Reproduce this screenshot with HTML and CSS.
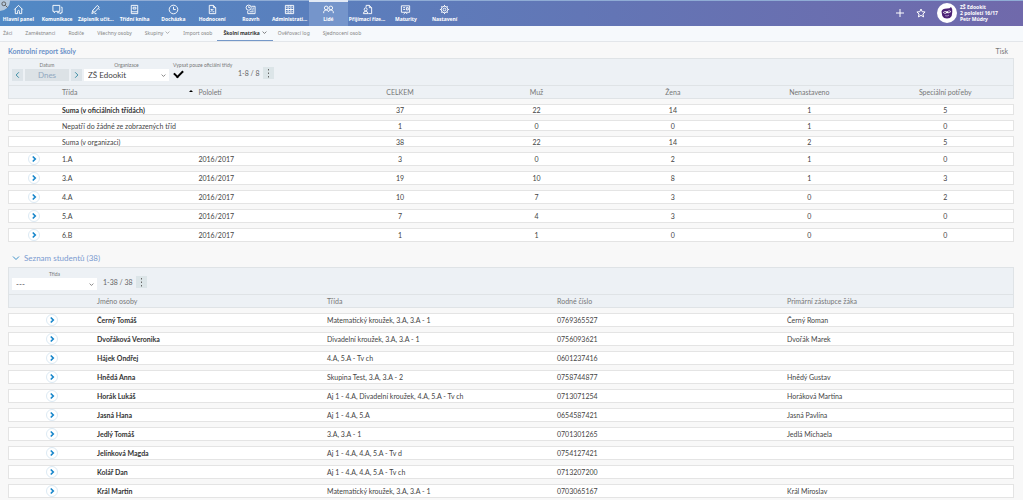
FILE: index.html
```html
<!DOCTYPE html>
<html lang="cs">
<head>
<meta charset="utf-8">
<title>Kontrolní report školy</title>
<link rel="stylesheet" href="styles.css">
</head>
<body>
<svg class="defs" aria-hidden="true">
<symbol id="right" viewBox="0 0 12 12"><path d="M4.500 3 7.500 6 4.500 9"/></symbol>
<symbol id="down" viewBox="0 0 8 8"><path d="M1 2.500 4 5.500 7 2.500"/></symbol>
</svg>
<header class="topbar">
<a class="search" href="#" aria-label="Hledat"><svg viewBox="0 0 8 8"><circle cx="3.200" cy="3.200" r="2.200"/><path d="M5 5 7.500 7.500"/></svg></a>
<nav class="main-nav">
<a href="#"><svg viewBox="0 0 12 12"><path d="M1.500 6 6 1.500 10.500 6M2.500 5v5.500H5V8a1 1 0 0 1 2 0v2.500h2.500V5"/></svg><span>Hlavní panel</span></a>
<a href="#"><svg viewBox="0 0 12 12"><path d="M1 1.500h7.500v6.500H4L2.500 9.500V8H1zM10 3.500h1V9.500H9.500V11L8 9.500H5.500"/></svg><span>Komunikace</span></a>
<a href="#"><svg viewBox="0 0 12 12"><path d="M2 10.500 3 7l5-5.500L10 3.500 5 9zM3 7l2 2M5 10.500h2M9 5l1.500 1"/></svg><span>Zápisník učit…</span></a>
<a href="#"><svg viewBox="0 0 12 12"><path d="M2.500 1.500h7v9h-7zM2.500 8.500h7M4.500 3.500h3v2h-3z"/></svg><span>Třídní kniha</span></a>
<a href="#"><svg viewBox="0 0 12 12"><circle cx="6" cy="6" r="4.700"/><path d="M6 3v3h2.500"/></svg><span>Docházka</span></a>
<a href="#"><svg viewBox="0 0 12 12"><path d="M2.500 1.500H7l2.500 2.500v6.500h-7zM7 1.500V4h2.500M4 8.500l3-3M4 6h2M6 8.500h2"/></svg><span>Hodnocení</span></a>
<a href="#"><svg viewBox="0 0 12 12"><circle cx="4" cy="4" r="2.800"/><path d="M4 2.500V4h1.500M7 2.500h4v8H3V7.500M5 8.500h4.500M7 6.500h2.500M8 4.500h2"/></svg><span>Rozvrh</span></a>
<a href="#"><svg viewBox="0 0 12 12"><path d="M1.500 1.500h9v9h-9zM4.500 1.500v9M7.500 1.500v9M1.500 6h9M3 3v1M6 3v1M9 3v1M3 8v1M6 8v1M9 8v1"/></svg><span>Administrati…</span></a>
<a href="#" class="active"><svg viewBox="0 0 12 12"><circle cx="3.500" cy="4.300" r="2"/><circle cx="8.500" cy="4.300" r="2"/><path d="M.8 10V8.500Q1.200 6.500 3.500 6.500 5.500 6.500 6 8.500 6.500 6.500 8.500 6.500 10.800 6.500 11.200 8.500V10"/></svg><span>Lidé</span></a>
<a href="#"><svg viewBox="0 0 12 12"><path d="M4.500 3.500v-2H8L10.500 4v6.500H7M8 1.500V4h2.500"/><circle cx="4" cy="5.800" r="1.600"/><path d="M1.500 10.500Q1.500 8 4 8t2.500 2.500z"/></svg><span>Přijímací říze…</span></a>
<a href="#"><svg viewBox="0 0 12 12"><path d="M1.500 2h9v7h-9zM3.500 4h2M3.500 6h2M7 4h2v2.500H7zM4 11l2-2 2 2"/></svg><span>Maturity</span></a>
<a href="#"><svg viewBox="0 0 12 12"><circle cx="6" cy="6" r="3.600"/><circle cx="6" cy="6" r="1.500"/><path d="M6 1v1.400M6 9.600V11M1 6h1.400M9.600 6H11M2.500 2.500l1 1M8.500 8.500l1 1M9.500 2.500l-1 1M3.500 8.500l-1 1"/></svg><span>Nastavení</span></a>
</nav>
<div class="user-area">
<button class="tool" aria-label="Přidat"><svg viewBox="0 0 10 10"><path d="M5 1v8M1 5h8"/></svg></button>
<button class="tool" aria-label="Oblíbené"><svg viewBox="0 0 10 10"><path d="m5 1 1.200 2.700 2.900.3-2.200 2 .7 2.900L5 7.400 2.400 8.900l.7-2.900L.9 4l2.900-.3z"/></svg></button>
<a class="profile" href="#"><svg viewBox="0 0 20 20"><circle cx="10" cy="10" r="10" fill="#fff" stroke="none"/><path fill="#4d2276" stroke="none" d="M4.500 8.500Q5 5.500 10 5.500q3 0 4-1.500Q16 6 15.300 9l-.6 4Q13.500 15.500 10 15.500T5.300 13z"/><path d="M6 9.500q1.500-2.500 4-1 2.500-2 4 0-1 2.500-4 1.500-2.500 1.500-4-.5z" fill="#fff" stroke="none"/><path d="M7 9.300h2M11 8.800h2M8 12.500q2 .8 4-.5" stroke="#4d2276"/><path d="M8.200 12.700q2 .8 3.800-.5" stroke="#e8dff0" stroke-width=".6"/></svg><span>ZŠ Edookit<br>2 pololetí 16/17<br>Petr Múdry</span></a>
</div>
</header>
<nav class="sub-nav">
<a href="#">Žáci</a><a href="#">Zaměstnanci</a><a href="#">Rodiče</a><a href="#">Všechny osoby</a><a href="#">Skupiny<svg><use href="#down"/></svg></a><a href="#">Import osob</a><a href="#" class="active">Školní matrika<svg><use href="#down"/></svg></a><a href="#">Ověřovací log</a><a href="#">Sjednocení osob</a>
</nav>
<main>
<div class="title-row"><h1>Kontrolní report školy</h1><a href="#">Tisk</a></div>
<section>
<form class="filters">
<div class="field"><label for="date">Datum</label><div class="date"><button type="button" aria-label="Předchozí den"><svg><use href="#right"/></svg></button><input id="date" value="Dnes" readonly><button type="button" aria-label="Další den"><svg><use href="#right"/></svg></button></div></div>
<div class="field"><label for="org">Organizace</label><div class="select"><select id="org"><option>ZŠ Edookit</option></select><svg><use href="#down"/></svg></div></div>
<div class="field check"><label for="official">Vypsat pouze oficiální třídy</label><input id="official" type="checkbox" checked></div>
<div class="count"><span>1-8 / 8</span><button type="button" class="more" aria-label="Další volby"><svg viewBox="0 0 10 12"><path d="M5 2v1.500M5 5.500V7M5 9v1.500"/></svg></button></div>
</form>
<table class="report">
<thead><tr><th></th><th class="sorted">Třída</th><th>Pololetí</th><th>CELKEM</th><th>Muž</th><th>Žena</th><th>Nenastaveno</th><th>Speciální potřeby</th></tr></thead>
<tbody>
<tr class="sum"><td></td><td class="strong" colspan="2">Suma (v oficiálních třídách)</td><td>37</td><td>22</td><td>14</td><td>1</td><td>5</td></tr>
<tr class="sum"><td></td><td colspan="2">Nepatří do žádné ze zobrazených tříd</td><td>1</td><td>0</td><td>0</td><td>1</td><td>0</td></tr>
<tr class="sum"><td></td><td colspan="2">Suma (v organizaci)</td><td>38</td><td>22</td><td>14</td><td>2</td><td>5</td></tr>
<tr><td><button class="open" aria-label="Otevřít 1.A"><svg><use href="#right"/></svg></button></td><td>1.A</td><td>2016/2017</td><td>3</td><td>0</td><td>2</td><td>1</td><td>0</td></tr>
<tr><td><button class="open" aria-label="Otevřít 3.A"><svg><use href="#right"/></svg></button></td><td>3.A</td><td>2016/2017</td><td>19</td><td>10</td><td>8</td><td>1</td><td>3</td></tr>
<tr><td><button class="open" aria-label="Otevřít 4.A"><svg><use href="#right"/></svg></button></td><td>4.A</td><td>2016/2017</td><td>10</td><td>7</td><td>3</td><td>0</td><td>2</td></tr>
<tr><td><button class="open" aria-label="Otevřít 5.A"><svg><use href="#right"/></svg></button></td><td>5.A</td><td>2016/2017</td><td>7</td><td>4</td><td>3</td><td>0</td><td>0</td></tr>
<tr><td><button class="open" aria-label="Otevřít 6.B"><svg><use href="#right"/></svg></button></td><td>6.B</td><td>2016/2017</td><td>1</td><td>1</td><td>0</td><td>0</td><td>0</td></tr>
</tbody>
</table>
</section>
<section>
<h2><svg><use href="#down"/></svg>Seznam studentů (38)</h2>
<form class="filters students-filter">
<div class="field"><label for="class">Třída</label><div class="select"><select id="class"><option>---</option></select><svg><use href="#down"/></svg></div></div>
<div class="count"><span>1-38 / 38</span><button type="button" class="more" aria-label="Další volby"><svg viewBox="0 0 10 12"><path d="M5 2v1.500M5 5.500V7M5 9v1.500"/></svg></button></div>
</form>
<table class="students">
<thead><tr><th></th><th>Jméno osoby</th><th>Třída</th><th>Rodné číslo</th><th>Primární zástupce žáka</th></tr></thead>
<tbody>
<tr><td><button class="open" aria-label="Otevřít"><svg><use href="#right"/></svg></button></td><td class="strong">Černý Tomáš</td><td>Matematický kroužek, 3.A, 3.A - 1</td><td>0769365527</td><td>Černý Roman</td></tr>
<tr><td><button class="open" aria-label="Otevřít"><svg><use href="#right"/></svg></button></td><td class="strong">Dvořáková Veronika</td><td>Divadelní kroužek, 3.A, 3.A - 1</td><td>0756093621</td><td>Dvořák Marek</td></tr>
<tr><td><button class="open" aria-label="Otevřít"><svg><use href="#right"/></svg></button></td><td class="strong">Hájek Ondřej</td><td>4.A, 5.A - Tv ch</td><td>0601237416</td><td></td></tr>
<tr><td><button class="open" aria-label="Otevřít"><svg><use href="#right"/></svg></button></td><td class="strong">Hnědá Anna</td><td>Skupina Test, 3.A, 3.A - 2</td><td>0758744877</td><td>Hnědý Gustav</td></tr>
<tr><td><button class="open" aria-label="Otevřít"><svg><use href="#right"/></svg></button></td><td class="strong">Horák Lukáš</td><td>Aj 1 - 4.A, Divadelní kroužek, 4.A, 5.A - Tv ch</td><td>0713071254</td><td>Horáková Martina</td></tr>
<tr><td><button class="open" aria-label="Otevřít"><svg><use href="#right"/></svg></button></td><td class="strong">Jasná Hana</td><td>Aj 1 - 4.A, 5.A</td><td>0654587421</td><td>Jasná Pavlína</td></tr>
<tr><td><button class="open" aria-label="Otevřít"><svg><use href="#right"/></svg></button></td><td class="strong">Jedlý Tomáš</td><td>3.A, 3.A - 1</td><td>0701301265</td><td>Jedlá Michaela</td></tr>
<tr><td><button class="open" aria-label="Otevřít"><svg><use href="#right"/></svg></button></td><td class="strong">Jelínková Magda</td><td>Aj 1 - 4.A, 4.A, 5.A - Tv d</td><td>0754127421</td><td></td></tr>
<tr><td><button class="open" aria-label="Otevřít"><svg><use href="#right"/></svg></button></td><td class="strong">Kolář Dan</td><td>Aj 1 - 4.A, 4.A, 5.A - Tv ch</td><td>0713207200</td><td></td></tr>
<tr><td><button class="open" aria-label="Otevřít"><svg><use href="#right"/></svg></button></td><td class="strong">Král Martin</td><td>Matematický kroužek, 3.A, 3.A - 1</td><td>0703065167</td><td>Král Miroslav</td></tr>
</tbody>
</table>
</section>
</main>
</body>
</html>
```
FILE: styles.css
```css
* { box-sizing: border-box; }
body { margin: 0; background: #f8f8f8; color: #444; font: 7px/8px "Noto Sans", "Open Sans", sans-serif; overflow: hidden; }
a { color: inherit; text-decoration: none; }
svg { display: block; fill: none; stroke: currentColor; stroke-width: 1; }
button, input, select { margin: 0; padding: 0; border: 0; border-radius: 0; color: inherit; font: inherit; background: none; appearance: none; }
.defs { position: absolute; width: 0; height: 0; }

.topbar { position: relative; display: flex; justify-content: space-between; height: 26px; color: #fff; background: linear-gradient(90deg, #5189c5, #6375b5 60%, #7069ab); border-top: 1px solid #8facd5; font-size: 5px; line-height: 6px; font-weight: 700; }
.search { position: absolute; z-index: 1; top: -1px; left: 0; width: 10px; height: 11px; padding: 1px; border-radius: 0 0 10px; color: #555; background: #b5c9dd; }
.search svg { width: 7px; height: 7px; }
.main-nav { display: flex; width: 465px; margin-left: -1px; }
.main-nav a { flex: 1 1 0; min-width: 0; display: flex; flex-direction: column; align-items: center; gap: 1px; padding-top: 3px; white-space: nowrap; }
.main-nav a.active { margin-top: -1px; border-top: 2px solid #e3eaf5; padding-top: 2px; background: #7595cb; }
.main-nav svg { width: 11px; height: 11px; }
.user-area { display: flex; align-items: center; gap: 11px; padding: 0 25px 1px 0; }
.tool svg { width: 10px; height: 10px; }
.profile { display: flex; align-items: center; gap: 3px; }
.profile svg { width: 20px; height: 20px; }

.sub-nav { display: flex; height: 16px; padding-left: 3px; gap: 13px; align-items: stretch; background: #f6f9fc; border-bottom: 1px solid #e3e6ea; color: #858585; font-size: 5px; line-height: 6px; }
.sub-nav a { display: flex; align-items: center; gap: 2px; padding-bottom: 2px; }
.sub-nav svg { width: 5px; height: 5px; }
.sub-nav .active { margin: 0 -8px; padding: 0 6px 1px; color: #333; font-weight: 700; border-bottom: 1px solid #7598c8; }

main { padding: 4px 9px 4px 8px; font-family: Lato, "Noto Sans", sans-serif; }
.title-row { display: flex; justify-content: space-between; align-items: center; height: 10px; margin-bottom: 2px; padding-right: 6px; color: #777; }
h1, h2 { margin: 0; color: #6a91c8; font-size: 7px; line-height: 10px; }
h2 { display: flex; align-items: center; gap: 4px; height: 20px; padding: 2px 4px 0; color: #7b9bd0; font-size: 8px; font-weight: 400; }
h2 svg { width: 8px; height: 8px; color: #3d91c9; }

.filters { display: flex; align-items: flex-start; height: 28px; padding: 3px 3px 0; gap: 2px; background: #edf1f5; border: 1px solid #dfe3e6; }
.field { display: flex; flex-direction: column; align-items: center; gap: 1px; font-size: 8px; }
.field label { color: #777; font-size: 5px; line-height: 6px; }
.date { display: flex; gap: 2px; }
.date button { width: 11px; height: 12px; background: #dde4e9; color: #3087a0; }
.date button:first-child svg { transform: scaleX(-1); }
.date svg { width: 11px; height: 12px; }
.date input { width: 44px; height: 12px; text-align: center; color: #91a8c0; background: #dce2e6; }
.select { position: relative; display: flex; }
.select select { width: 85px; height: 12px; padding: 0 4px; background: #fff; }
.select svg { position: absolute; right: 3px; top: 4px; width: 5px; height: 5px; pointer-events: none; }
.check { align-items: flex-start; padding-left: 2px; }
.check label { width: 61px; white-space: nowrap; }
.check input { width: 9px; height: 8px; }
.check input::before { content: ""; display: block; width: 7px; height: 4px; margin: 1px; border: solid #000; border-width: 0 0 2px 2px; transform: rotate(-45deg); }
.count { display: flex; align-items: center; gap: 3px; padding: 5px 0 0 2px; color: #666; font-size: 7px; }
.more { width: 11px; height: 12px; background: #dce5e8; }
.more svg { width: 11px; height: 12px; }
.students-filter .count { padding-left: 4px; }

table { width: 100%; margin: -5px 0 0; border-collapse: separate; border-spacing: 0 5px; table-layout: fixed; }
th, td { padding: 0 3px; text-align: left; vertical-align: middle; white-space: nowrap; border: solid #e4e4e4; border-width: 1px 0; background: #fff; }
td { height: 14px; }
th { height: 13px; color: #777; font-weight: 400; background: #edf1f5; border-color: #dfe3e6; border-top: 0; }
th:first-child, td:first-child { border-left-width: 1px; }
th:last-child, td:last-child { border-right-width: 1px; }
.strong { font-weight: 700; color: #333; }
.sum td { height: 11px; }
.report th:first-child { width: 51px; }
.report th:nth-child(n+4), .report td:nth-last-child(-n+5) { text-align: center; }
.sorted { position: relative; }
.sorted::after { content: ""; position: absolute; right: 2px; top: 4px; border: solid transparent; border-width: 0 2px 2px; border-bottom-color: #000; }
.students th:first-child { width: 86px; }
.open { display: block; width: 12px; height: 12px; margin: auto; border: 1px solid #dceaf4; border-radius: 50%; color: #1686cb; }
.open svg { width: 10px; height: 10px; stroke-width: 2; }
```
